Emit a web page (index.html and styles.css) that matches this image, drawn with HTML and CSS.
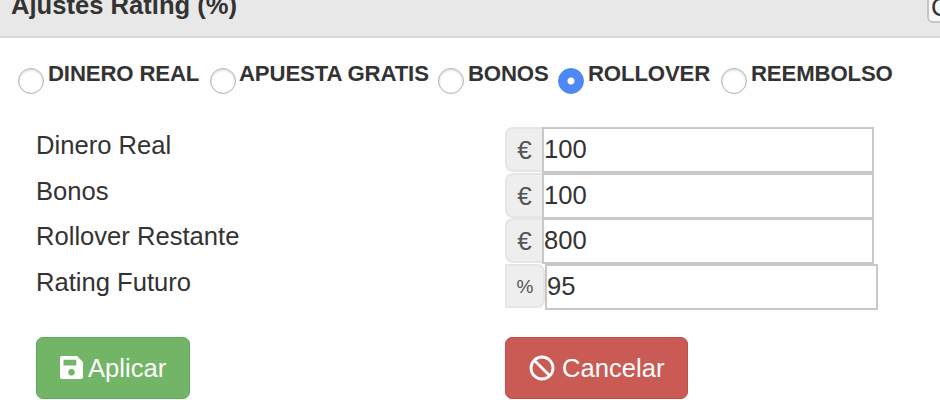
FILE: index.html
```html
<!DOCTYPE html>
<html lang="es">
<head>
<meta charset="utf-8">
<title>Ajustes Rating</title>
<link rel="stylesheet" href="styles.css">
</head>
<body>
<header class="panel-head">
  <h2 class="title"><span>Ajustes Rating (%)</span></h2>
  <span class="head-btn">C</span>
</header>
<main>
  <div class="options">
    <label class="option"><i class="radio"></i><span>DINERO REAL</span></label>
    <label class="option tight"><i class="radio"></i><span>APUESTA GRATIS</span></label>
    <label class="option"><i class="radio"></i><span>BONOS</span></label>
    <label class="option"><i class="radio checked"></i><span>ROLLOVER</span></label>
    <label class="option"><i class="radio"></i><span>REEMBOLSO</span></label>
  </div>
  <div class="fields">
    <div class="row"><span class="name">Dinero Real</span><span class="addon">€</span><span class="input">100</span></div>
    <div class="row"><span class="name">Bonos</span><span class="addon">€</span><span class="input">100</span></div>
    <div class="row"><span class="name">Rollover Restante</span><span class="addon">€</span><span class="input">800</span></div>
    <div class="row last"><span class="name">Rating Futuro</span><span class="addon percent">%</span><span class="input">95</span></div>
  </div>
  <div class="actions">
    <button class="btn apply"><svg width="23" height="23" viewBox="0 0 23 23"><path fill="#fff" fill-rule="evenodd" d="M2 0H17L23 6V21Q23 23 21 23H2Q0 23 0 21V2Q0 0 2 0ZM3.5 3.8V9.4H16.3V3.8ZM11.5 13A3.2 3.2 0 1 0 11.5 19.4A3.2 3.2 0 1 0 11.5 13Z"/></svg><span>Aplicar</span></button>
    <button class="btn cancel"><svg width="26" height="26" viewBox="0 0 26 26" fill="none" stroke="#fff" stroke-width="2.8"><circle cx="13" cy="13" r="11"/><path d="M5.2 5.2L20.8 20.8"/></svg><span>Cancelar</span></button>
  </div>
</main>
</body>
</html>
```
FILE: styles.css
```css
* { box-sizing: border-box; }
body {
  margin: 0;
  width: 940px;
  height: 400px;
  overflow: hidden;
  background: #fefefe;
  color: #333;
  font-family: "Liberation Sans", Arial, sans-serif;
}
.panel-head {
  display: flex;
  justify-content: space-between;
  height: 38px;
  background: #e8e8e8;
  border-bottom: 2px solid #d9d9d9;
  overflow: hidden;
}
.title {
  margin: -10px 0 0 11px;
  font-size: 25.6px;
  line-height: 30px;
  white-space: nowrap;
}
.head-btn {
  width: 40px;
  height: 38px;
  margin: -15px -27px 0 0;
  padding-left: 2px;
  border: 2px solid #c6c6c6;
  border-radius: 6px;
  background: #f8f8f8;
  font-size: 26px;
  line-height: 40px;
}
.options {
  display: grid;
  grid-template-columns: 192px 228px 120px 163px 200px;
  padding-left: 18px;
  height: 89px;
  padding-top: 22px;
}
.option {
  display: flex;
  align-items: flex-start;
  font-weight: bold;
  font-size: 22.2px;
  line-height: 28px;
  letter-spacing: -0.15px;
  white-space: nowrap;
}
.radio {
  flex: none;
  width: 26px;
  height: 26px;
  margin: 8px 4px 0 0;
  border: 1px solid #b4b4b4;
  border-radius: 50%;
  background: #fff;
  box-shadow: inset 0 1px 3px #d4d4d4;
}
.tight .radio { margin-right: 3px; }
.radio.checked {
  border-color: #4b86f0;
  background: radial-gradient(circle, #fff 3px, #4d89f5 4px);
  box-shadow: none;
}
.row {
  display: grid;
  grid-template-columns: 469px 37px 332px;
  height: 45.7px;
  padding-left: 36px;
}
.row.last { grid-template-columns: 469px 40px 333px; }
.name {
  font-size: 25.6px;
  line-height: 36px;
}
.addon {
  height: 45px;
  border: 2px solid #e5e5e5;
  border-right: 0;
  border-radius: 8px 0 0 8px;
  background: #eee;
  color: #555;
  font-size: 26px;
  line-height: 42px;
  text-align: center;
}
.addon.percent {
  height: 44px;
  border: 2px solid #e5e5e5;
  border-radius: 0 8px 8px 0;
  font-size: 19px;
  line-height: 41px;
}
.input {
  height: 46px;
  border: 2px solid #c8c8c8;
  background: #fff;
  font-size: 25.6px;
  line-height: 40px;
}
.actions {
  display: grid;
  grid-template-columns: 469px 183px;
  padding: 27px 0 0 36px;
}
.btn {
  display: flex;
  align-items: center;
  height: 62px;
  padding: 0 0 0 23px;
  border: 1px solid #5cab5c;
  border-radius: 7px;
  color: #fff;
  font: 25.6px "Liberation Sans", Arial, sans-serif;
}
.btn svg { flex: none; }
.btn span { padding-top: 2px; }
.apply {
  width: 154px;
  background: #72b567;
  gap: 5px;
}
.cancel {
  background: #c95b54;
  border-color: #c44a47;
  gap: 7px;
}
```
